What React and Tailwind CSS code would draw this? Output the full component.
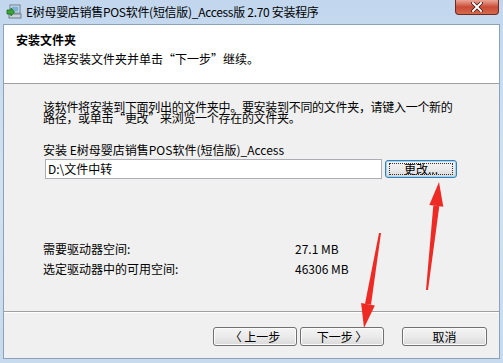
import React from 'react'

const cjk = { fontFamily: '"Noto Sans CJK SC", "Noto Sans", sans-serif' }

function WinButton({ children, focused, className = '' }) {
  return (
    <div
      className={`flex items-center justify-center rounded-[3px] border text-[12px] leading-none text-black ${
        focused ? 'border-[#3c7fb1] shadow-[inset_0_0_0_1px_#9ed6f3]' : 'border-[#707070] shadow-[inset_0_0_0_1px_#fcfcfc]'
      } bg-gradient-to-b from-[#f4f4f4] via-[#ebebeb] to-[#d9d9d9] ${className}`}
    >
      {focused ? (
        <div className="flex h-[12px] w-[64px] items-center justify-center border border-dotted border-[#333]">{children}</div>
      ) : (
        children
      )}
    </div>
  )
}

function SetupIcon() {
  return (
    <svg width="16" height="16" viewBox="0 0 16 16">
      <rect x="4" y="1" width="10" height="8" fill="#dfe8ef" stroke="#6b7d8c" />
      <rect x="5.5" y="2.5" width="7" height="5" fill="#7fb0d8" />
      <rect x="3" y="10" width="12" height="4" fill="#c9d2da" stroke="#6b7d8c" />
      <path d="M1 6 L5 6 L5 4 L8.5 8 L5 12 L5 10 L1 10 Z" fill="#3aa535" stroke="#1c6e1a" strokeWidth="0.8" />
    </svg>
  )
}

export default function App() {
  return (
    <div
      className="relative flex h-[363px] w-[503px] flex-col overflow-hidden bg-gradient-to-b from-[#c2d7ee] via-[#d3e2f2] to-[#c7daee] text-black"
      style={cjk}
    >
      {/* Title bar */}
      <div className="flex h-[24px] shrink-0 items-start">
        <div className="ml-[6px] mt-[4px]">
          <SetupIcon />
        </div>
        <div className="ml-[4px] mt-[3px] text-[12px] leading-[18px] tracking-[-0.3px] text-black">
          E树母婴店销售POS软件(短信版)_Access版 2.70 安装程序
        </div>
        <div className="ml-auto mr-[4px] flex h-[15px] w-[44px] items-center justify-center rounded-b-[4px] border border-t-0 border-[#6b2a22] bg-gradient-to-b from-[#e9a597] via-[#c94a36] to-[#d66a4c]">
          <svg width="12" height="10" viewBox="0 0 12 10">
            <path d="M2 1 L10 9 M10 1 L2 9" stroke="#3b1410" strokeWidth="3.4" strokeLinecap="square" />
            <path d="M2 1 L10 9 M10 1 L2 9" stroke="#ffffff" strokeWidth="2" strokeLinecap="square" />
          </svg>
        </div>
      </div>

      {/* Client area */}
      <div className="mx-[3px] flex flex-1 flex-col border border-[#8aa2bb] bg-[#f0f0f0]">
        {/* Header */}
        <div className="h-[59px] shrink-0 border-b border-[#a0a0a0] bg-white pl-[12px] pt-[7px]">
          <div className="text-[12px] font-bold leading-[16px]">安装文件夹</div>
          <div className="ml-[27px] mt-[3px] text-[12px] leading-[16px]">选择安装文件夹并单击“下一步”继续。</div>
        </div>

        {/* Body */}
        <div className="h-[228px] shrink-0 border-b border-[#a0a0a0] pl-[39px] pt-[17px] text-[12px]">
          <div className="w-[420px] leading-[11px] tracking-[-0.3px]">
            该软件将安装到下面列出的文件夹中。要安装到不同的文件夹，请键入一个新的路径，或单击“更改”来浏览一个存在的文件夹。
          </div>
          <div className="mt-[19px] leading-[16px]">安装 E树母婴店销售POS软件(短信版)_Access</div>
          <div className="mt-[1px] flex items-start">
            <div className="ml-[2px] flex h-[20px] w-[337px] items-center border border-[#abadb3] bg-white pl-[2px] leading-none">
              D:\文件中转
            </div>
            <WinButton focused className="ml-[3px] mt-[1px] h-[18px] w-[72px]">
              更改...
            </WinButton>
          </div>
          <div className="mt-[60px] flex h-[20px] items-center">
            <div className="w-[252px]">需要驱动器空间:</div>
            <div>27.1 MB</div>
          </div>
          <div className="flex h-[20px] items-center">
            <div className="w-[252px]">选定驱动器中的可用空间:</div>
            <div>46306 MB</div>
          </div>
        </div>

        {/* Buttons */}
        <div className="flex flex-1 items-start border-t border-white pt-[14px]">
          <WinButton className="ml-[209px] h-[19px] w-[84px]">〈 上一步</WinButton>
          <WinButton className="ml-[3px] h-[19px] w-[84px]">下一步 〉</WinButton>
          <WinButton className="ml-[18px] h-[19px] w-[85px]">取消</WinButton>
        </div>
      </div>
      <div className="h-[4px] shrink-0" />

      {/* Red annotation arrows */}
      <svg className="pointer-events-none absolute left-0 top-0" width="503" height="363" viewBox="0 0 503 363">
        <polygon points="428,290 426,290 433.3,205.6 439.3,206.2" fill="#ee2a24" />
        <polygon points="439,182 443.3,206.7 429.3,205.1" fill="#ee2a24" />
        <polygon points="381,233 379,233 365,303.8 371,304.8" fill="#ee2a24" />
        <polygon points="364,328 374.9,305.5 361.1,303.1" fill="#ee2a24" />
      </svg>
    </div>
  )
}
